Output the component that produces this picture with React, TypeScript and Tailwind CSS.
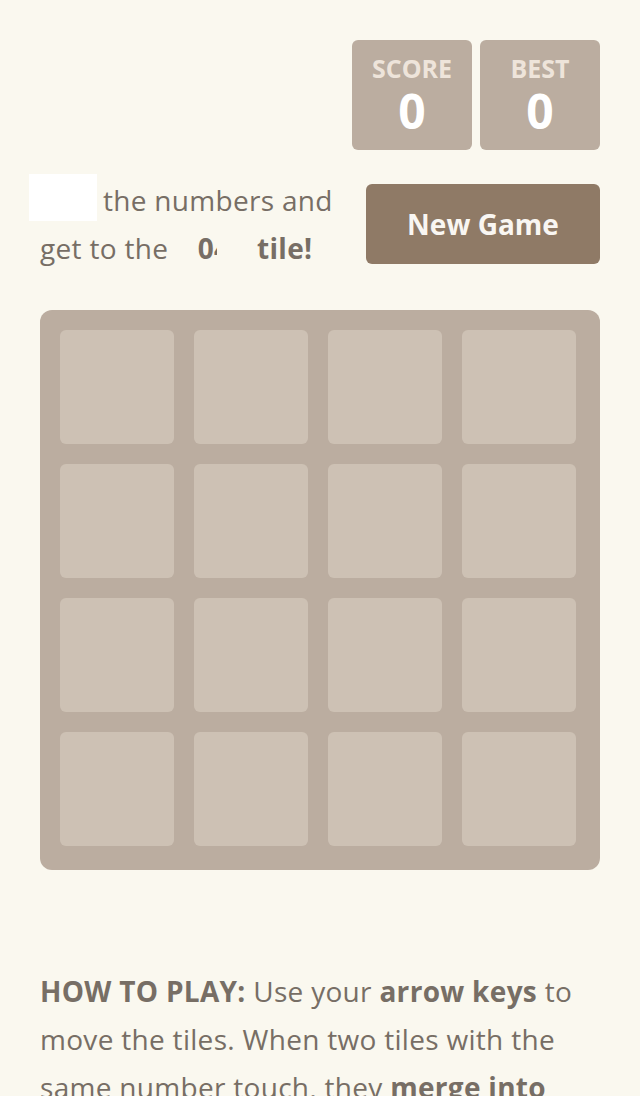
import React from "react";

export default function App() {
  const cells = Array.from({ length: 16 });
  return (
    <div
      className="min-h-[1096px] w-[640px] bg-[#faf8ef] text-[#776e65] overflow-hidden"
      style={{ fontFamily: '"Open Sans", "Noto Sans", sans-serif' }}
    >
      <div className="px-10 pt-10">
        <div className="flex justify-end gap-2">
          <div className="w-[120px] h-[110px] rounded-md bg-[#bbada0] flex flex-col items-center pt-[11px]">
            <div className="text-[25px] leading-[34px] font-bold text-[#eee4da]">SCORE</div>
            <div className="text-[48px] leading-[52px] font-bold text-white">0</div>
          </div>
          <div className="w-[120px] h-[110px] rounded-md bg-[#bbada0] flex flex-col items-center pt-[11px]">
            <div className="text-[25px] leading-[34px] font-bold text-[#eee4da]">BEST</div>
            <div className="text-[48px] leading-[52px] font-bold text-white">0</div>
          </div>
        </div>
        <div className="flex justify-between items-center mt-[26px]">
          <div className="text-[28px] leading-[48px] tracking-[0.3px]">
            <div className="flex items-center">
              <span className="inline-block bg-white w-[68px] h-[47px] -ml-[11px] mr-[6px] -translate-y-[3px]"></span>
              <span>the numbers and</span>
            </div>
            <div className="whitespace-nowrap">
              get to the <span className="font-bold ml-[22px]">0</span>
              <span className="inline-block w-[3px] overflow-hidden align-bottom font-bold">4</span>
              <span className="font-bold ml-[40px]">tile!</span>
            </div>
          </div>
          <div className="w-[234px] h-[80px] rounded-md bg-[#8f7a66] text-[#f9f6f2] font-bold text-[28px] flex items-center justify-center">
            New Game
          </div>
        </div>
        <div className="mt-[38px] w-[560px] h-[560px] rounded-xl bg-[#bbada0] pt-5 pl-5 grid grid-cols-[repeat(4,114px)] grid-rows-[repeat(4,114px)] gap-5">
          {cells.map((_, i) => (
            <div key={i} className="rounded-md bg-[#cdc1b4]"></div>
          ))}
        </div>
        <div className="mt-[97px] text-[28px] leading-[48px] tracking-[0.3px]">
          <span className="font-bold">HOW TO PLAY:</span> Use your{" "}
          <span className="font-bold">arrow keys</span> to move the tiles. When two tiles with the
          same number touch, they <span className="font-bold">merge into one!</span>
        </div>
      </div>
    </div>
  );
}
